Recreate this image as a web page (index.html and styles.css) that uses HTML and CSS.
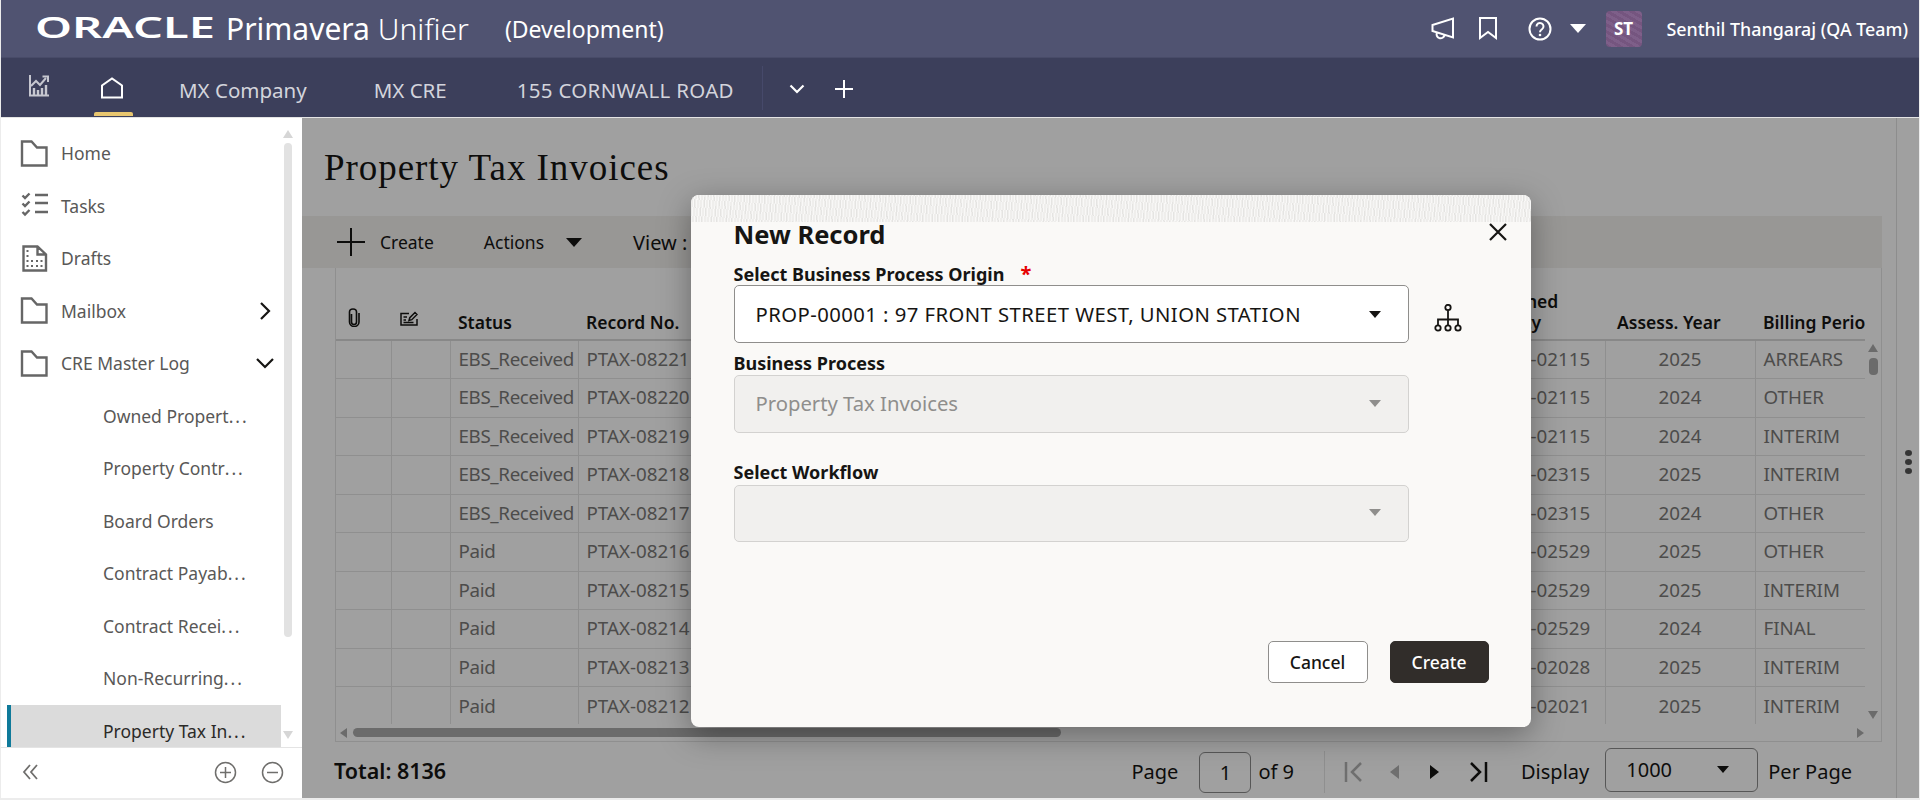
FILE: index.html
```html
<!DOCTYPE html>
<html>
<head>
    <title>Property Tax Invoices</title>
    <link rel="stylesheet" href="styles.css">
</head>

<body>
<div class="app">
    <div class="topbar">
        <svg class="oracle" width="184" height="42"><text x="0" y="32" textLength="180" lengthAdjust="spacingAndGlyphs">ORACLE</text></svg>
        <span class="product">Primavera <span class="thin">Unifier</span></span>
        <span class="env">(Development)</span>
        <div class="top-right">
            <svg class="ico" width="24" height="24" viewBox="0 0 24 24"><path d="M1.500 8 22 1.500v19L1.500 14zM6 15.500a4 4 0 1 0 7.500 2.500" fill="none" stroke="#fff" stroke-width="2"/></svg>
            <svg class="ico bm" width="20" height="23" viewBox="0 0 20 23"><path d="M2 1h16v20l-8-6-8 6z" fill="none" stroke="#fff" stroke-width="2"/></svg>
            <svg class="ico help" width="24" height="24" viewBox="0 0 24 24"><circle cx="12" cy="12" r="10.500" fill="none" stroke="#fff" stroke-width="2"/><path d="M8.500 9.500a3.500 3.500 0 1 1 5.500 2.800c-1.300.9-2 1.500-2 3" fill="none" stroke="#fff" stroke-width="2"/><circle cx="12" cy="18" r="1.300" fill="#fff"/></svg>
            <span class="caret-white"></span>
            <span class="avatar">ST</span>
            <span class="username">Senthil Thangaraj (QA Team)</span>
        </div>
    </div>

    <div class="navbar">
        <svg class="nav-chart" width="22" height="22" viewBox="0 0 22 22"><path d="M2 0v20.500h19" fill="none" stroke="#c6c7d0" stroke-width="2"/><path d="M3 11l5-5 4 4 6-7" fill="none" stroke="#c6c7d0" stroke-width="2"/><path d="M14.500 1.500H20V7" fill="none" stroke="#c6c7d0" stroke-width="2"/><path d="M6 20v-7M10 20v-5M14 20v-7M18 20V10" stroke="#c6c7d0" stroke-width="2.400"/></svg>
        <div class="nav-home">
            <svg width="24" height="22" viewBox="0 0 24 22"><path d="M2 20.500V8.500L12 1.500l10 7v12z" fill="none" stroke="#fff" stroke-width="2"/></svg>
            <span class="home-mark"></span>
        </div>
        <span class="nav-tab tab-company">MX Company</span>
        <span class="nav-tab tab-cre">MX CRE</span>
        <span class="nav-tab tab-road">155 CORNWALL ROAD</span>
        <span class="nav-sep"></span>
        <svg class="nav-more" width="16" height="10" viewBox="0 0 16 10"><path d="M1.500 1.500 8 8l6.500-6.500" fill="none" stroke="#fff" stroke-width="2.200"/></svg>
        <svg class="nav-add" width="20" height="20" viewBox="0 0 20 20"><path d="M10 1v18M1 10h18" stroke="#fff" stroke-width="2"/></svg>
    </div>

    <div class="workspace">
        <div class="sidebar">
            <div class="side-list">
                <div class="side-items">
                    <div class="side-item"><svg class="side-ico" width="28" height="27" viewBox="0 0 28 27"><path class="outline" d="M2 1.500H11.500L17 7.500h9.500v18H2z"/></svg>Home</div>
                    <div class="side-item"><svg class="side-ico" width="28" height="27" viewBox="0 0 28 27"><path class="outline" d="M2.500 3.500l2.500 2.500 4.500-4.500M2.500 11.500l2.500 2.500 4.500-4.500M2.500 20l2.500 2.500 4.500-4.500M15 3h13M15 11h13M15 20h13"/></svg>Tasks</div>
                    <div class="side-item"><svg class="side-ico" width="28" height="27" viewBox="0 0 28 27"><path class="outline" d="M3.500 1.500H17.500L26 9.500v16H3.500zM17.500 1.500v8H26"/><path class="dots" d="M6.500 6h2M6.500 11h2M6.500 16h2M11 16h2M16 16h2M20.500 16h2M6.500 21h2M11 21h2M16 21h2M20.500 21h2"/></svg>Drafts</div>
                    <div class="side-item"><svg class="side-ico" width="28" height="27" viewBox="0 0 28 27"><path class="outline" d="M2 1.500H11.500L17 7.500h9.500v18H2z"/></svg>Mailbox<svg class="side-arrow" width="12" height="20" viewBox="0 0 12 20"><path d="M2 2l8 8-8 8" fill="none" stroke="#161513" stroke-width="2.200"/></svg></div>
                    <div class="side-item"><svg class="side-ico" width="28" height="27" viewBox="0 0 28 27"><path class="outline" d="M2 1.500H11.500L17 7.500h9.500v18H2z"/></svg>CRE Master Log<svg class="side-arrow down" width="20" height="12" viewBox="0 0 20 12"><path d="M2 2l8 8 8-8" fill="none" stroke="#161513" stroke-width="2.200"/></svg></div>
                    <div class="side-item sub">Owned Propert<span class="more">...</span></div>
                    <div class="side-item sub">Property Contr<span class="more">...</span></div>
                    <div class="side-item sub">Board Orders</div>
                    <div class="side-item sub">Contract Payab<span class="more">...</span></div>
                    <div class="side-item sub">Contract Recei<span class="more">...</span></div>
                    <div class="side-item sub">Non-Recurring<span class="more">...</span></div>
                    <div class="side-item sub selected">Property Tax In<span class="more">...</span></div>
                </div>
                <div class="side-scroll">
                    <span class="arrow-up"></span>
                    <span class="side-thumb"></span>
                    <span class="arrow-down"></span>
                </div>
            </div>
            <div class="side-foot">
                <svg width="18" height="18" viewBox="0 0 18 18"><path d="M8 2 2 9l6 7M15 2 9 9l6 7" fill="none" stroke="#6f6e6c" stroke-width="1.800"/></svg>
                <svg class="foot-plus" width="23" height="23" viewBox="0 0 23 23"><circle cx="11.500" cy="11.500" r="10" fill="none" stroke="#6f6e6c" stroke-width="1.500"/><path d="M11.500 6v11M6 11.500h11" stroke="#6f6e6c" stroke-width="1.500"/></svg>
                <svg class="foot-minus" width="23" height="23" viewBox="0 0 23 23"><circle cx="11.500" cy="11.500" r="10" fill="none" stroke="#6f6e6c" stroke-width="1.500"/><path d="M6 11.500h11" stroke="#6f6e6c" stroke-width="1.500"/></svg>
            </div>
        </div>

        <div class="main">
            <div class="content">
                <h1 class="page-title">Property Tax Invoices</h1>
                <div class="toolbar">
                    <svg width="28" height="28" viewBox="0 0 28 28"><path d="M14 0v28M0 14h28" stroke="#161513" stroke-width="2"/></svg>
                    <span class="tool-create">Create</span>
                    <span class="tool-actions">Actions</span>
                    <span class="caret-dark"></span>
                    <span class="tool-view">View :</span>
                </div>
                <div class="grid">
                    <div class="grid-body">
                        <div class="table-wrap">
                            <table class="records">
                                <colgroup>
                                    <col class="c-attach"><col class="c-edit"><col class="c-status"><col class="c-record"><col class="c-fill"><col class="c-prop"><col class="c-year"><col class="c-bill">
                                </colgroup>
                                <thead>
                                    <tr>
                                        <th class="icon-head"><svg width="14" height="19" viewBox="0 0 14 19"><path d="M4.500 6v8a2.500 2.500 0 0 0 5 0V4a3.500 3 0 0 0-7 0v10a4.750 4.500 0 0 0 9.500 0V5" fill="none" stroke="#161513" stroke-width="1.600"/></svg></th>
                                        <th class="icon-head edit-head"><svg width="18" height="15" viewBox="0 0 18 15"><path d="M9 2.500H1v11.500h16V8M3.500 6H7M3.500 9H6M3.500 11.500h10M9 9.500l.8-2.800L15 1.500 17 3.500l-5.200 5.200z" fill="none" stroke="#161513" stroke-width="1.500"/></svg></th>
                                        <th>Status</th>
                                        <th>Record No.</th>
                                        <th></th>
                                        <th>Assigned<br>Facility</th>
                                        <th class="year-head">Assess. Year</th>
                                        <th>Billing Period</th>
                                    </tr>
                                </thead>
                                <tbody>
                                    <tr><td></td><td></td><td class="st">EBS_Received</td><td>PTAX-08221</td><td></td><td>PROP-02115</td><td class="mid">2025</td><td>ARREARS</td></tr>
                                    <tr><td></td><td></td><td class="st">EBS_Received</td><td>PTAX-08220</td><td></td><td>PROP-02115</td><td class="mid">2024</td><td>OTHER</td></tr>
                                    <tr><td></td><td></td><td class="st">EBS_Received</td><td>PTAX-08219</td><td></td><td>PROP-02115</td><td class="mid">2024</td><td>INTERIM</td></tr>
                                    <tr><td></td><td></td><td class="st">EBS_Received</td><td>PTAX-08218</td><td></td><td>PROP-02315</td><td class="mid">2025</td><td>INTERIM</td></tr>
                                    <tr><td></td><td></td><td class="st">EBS_Received</td><td>PTAX-08217</td><td></td><td>PROP-02315</td><td class="mid">2024</td><td>OTHER</td></tr>
                                    <tr><td></td><td></td><td class="st">Paid</td><td>PTAX-08216</td><td></td><td>PROP-02529</td><td class="mid">2025</td><td>OTHER</td></tr>
                                    <tr><td></td><td></td><td class="st">Paid</td><td>PTAX-08215</td><td></td><td>PROP-02529</td><td class="mid">2025</td><td>INTERIM</td></tr>
                                    <tr><td></td><td></td><td class="st">Paid</td><td>PTAX-08214</td><td></td><td>PROP-02529</td><td class="mid">2024</td><td>FINAL</td></tr>
                                    <tr><td></td><td></td><td class="st">Paid</td><td>PTAX-08213</td><td></td><td>PROP-02028</td><td class="mid">2025</td><td>INTERIM</td></tr>
                                    <tr><td></td><td></td><td class="st">Paid</td><td>PTAX-08212</td><td></td><td>PROP-02021</td><td class="mid">2025</td><td>INTERIM</td></tr>
                                </tbody>
                            </table>
                        </div>
                        <div class="vscroll">
                            <span class="arrow-up"></span>
                            <span class="v-thumb"></span>
                            <span class="arrow-down"></span>
                        </div>
                    </div>
                    <div class="hscroll">
                        <span class="arrow-left"></span>
                        <span class="h-thumb"></span>
                        <span class="arrow-right"></span>
                    </div>
                </div>
                <div class="pager">
                    <span class="total">Total: 8136</span>
                    <span class="page-label">Page</span>
                    <span class="page-box">1</span>
                    <span class="page-of">of 9</span>
                    <span class="pager-sep"></span>
                    <svg class="pg-first" width="20" height="22" viewBox="0 0 20 22"><path d="M2 1v20" stroke="#b0b0b0" stroke-width="2.500"/><path d="M17 2 8 11l9 9" fill="none" stroke="#b0b0b0" stroke-width="2.500"/></svg>
                    <span class="tri-left"></span>
                    <span class="tri-right"></span>
                    <svg class="pg-last" width="20" height="22" viewBox="0 0 20 22"><path d="M18 1v20" stroke="#161513" stroke-width="2.500"/><path d="M3 2l9 9-9 9" fill="none" stroke="#161513" stroke-width="2.500"/></svg>
                    <span class="display-label">Display</span>
                    <span class="display-box">1000<span class="caret-dark small"></span></span>
                    <span class="per-page">Per Page</span>
                </div>
            </div>
            <div class="rail">
                <span class="dot"></span><span class="dot"></span><span class="dot"></span>
            </div>

            <div class="scrim">
                <div class="modal">
                    <div class="modal-band"></div>
                    <svg class="modal-close" width="20" height="20" viewBox="0 0 20 20"><path d="M2 2l16 16M18 2 2 18" stroke="#161513" stroke-width="2.200"/></svg>
                    <h2 class="modal-title">New Record</h2>
                    <div class="field-label first">Select Business Process Origin<span class="req">*</span></div>
                    <div class="origin-row">
                        <div class="select origin">PROP-00001 : 97 FRONT STREET WEST, UNION STATION<span class="select-caret"></span></div>
                        <svg class="tree" width="28" height="28" viewBox="0 0 28 28"><circle cx="14" cy="3.500" r="2.700" fill="none" stroke="#161513" stroke-width="1.800"/><path d="M14 6.500v9M4 21v-5.500h20V21M14 15.500V21" fill="none" stroke="#161513" stroke-width="1.800"/><circle cx="4" cy="24" r="2.700" fill="none" stroke="#161513" stroke-width="1.800"/><circle cx="14" cy="24" r="2.700" fill="none" stroke="#161513" stroke-width="1.800"/><circle cx="24" cy="24" r="2.700" fill="none" stroke="#161513" stroke-width="1.800"/></svg>
                    </div>
                    <div class="field-label second">Business Process</div>
                    <div class="select off">Property Tax Invoices<span class="select-caret"></span></div>
                    <div class="field-label third">Select Workflow</div>
                    <div class="select off last">&nbsp;<span class="select-caret"></span></div>
                    <div class="modal-foot">
                        <button class="btn">Cancel</button>
                        <button class="btn primary">Create</button>
                    </div>
                </div>
            </div>
        </div>
    </div>
</div>
</body>
</html>
```

FILE: styles.css
```css
* { box-sizing: border-box; }
body { margin: 0; background-color: #ececec; font-family: "Noto Sans", Arial, sans-serif; color: #161513; }

.app { width: 1920px; height: 800px; padding: 0 1px 2px 1px; display: flex; flex-direction: column; overflow: hidden; }

/* top bars */
.topbar { height: 58px; background-color: #505371; color: #fff; display: flex; align-items: center; border-bottom: 1px solid #484b68; }
.oracle { margin-left: 34px; margin-bottom: 3px; flex-shrink: 0; }
.oracle text { font-family: "Noto Sans", sans-serif; font-weight: 600; font-size: 28px; fill: #fff; }
.product { margin-left: 7px; font-size: 30px; }
.product .thin { font-weight: 300; }
.env { margin-left: 36px; font-size: 23px; }
.top-right { margin-left: auto; display: flex; align-items: center; padding-right: 11px; }
.bm { margin-left: 23px; }
.help { margin-left: 30px; }
.caret-white { margin-left: 18px; border-left: 8px solid transparent; border-right: 8px solid transparent; border-top: 9px solid #fff; }
.avatar {
    margin-left: 20px;
    width: 36px;
    height: 36px;
    border-radius: 4px;
    background: repeating-linear-gradient(30deg, #75557f 0 3px, #7e5f89 3px 6px);
    display: flex;
    align-items: center;
    justify-content: center;
    font-size: 17px;
    font-weight: 700;
}
.username { margin-left: 25px; font-size: 17.850px; font-weight: 500; }

.navbar { height: 60px; background-color: #3c3f5b; border-bottom: 1px solid #e4e4e4; display: flex; align-items: center; color: #d3d4dc; font-size: 20.500px; }
.nav-chart { margin-left: 27px; margin-top: -3px; }
.nav-home { margin-left: 43px; width: 40px; height: 59px; display: flex; flex-direction: column; align-items: center; padding-top: 19px; }
.nav-tab { padding-top: 4px; }
.nav-home svg { margin-left: -3px; }
.home-mark { margin-top: 13px; width: 39px; height: 4px; background-color: #e8c66f; border-radius: 2px 2px 0 0; }
.tab-company { margin-left: 46px; }
.tab-cre { margin-left: 67px; }
.tab-road { margin-left: 70px; letter-spacing: .3px; }
.nav-sep { margin-left: 28px; width: 1px; height: 44px; background-color: #46496a; }
.nav-more { margin-left: 26px; margin-top: 3px; }
.nav-add { margin-left: 29px; margin-top: 3px; }

.workspace { flex-grow: 1; display: flex; min-height: 0; }

/* left tree */
.sidebar { width: 301px; background-color: #fff; display: flex; flex-direction: column; }
.side-list { height: 630px; padding-left: 6px; display: flex; overflow: hidden; border-bottom: 1px solid #e4e4e4; }
.side-items { width: 274px; flex-shrink: 0; padding-top: 9px; }
.side-item { height: 52.500px; display: flex; align-items: center; font-size: 17.500px; color: #595857; padding-left: 13px; }
.side-ico { margin-right: 13px; flex-shrink: 0; }
.outline { fill: none; stroke: #666; stroke-width: 2.400; }
.dots { stroke: #666; stroke-width: 2; }
.more { letter-spacing: 2px; }
.side-arrow { margin-left: auto; margin-right: 10px; }
.side-arrow.down { margin-right: 6px; }
.side-item.sub { padding-left: 96px; }
.side-item.selected { background-color: #dbdbdb; border-left: 4px solid #0f7a9a; padding-left: 92px; color: #2b2a28; }
.side-scroll { width: 11px; margin-left: 1px; display: flex; flex-direction: column; align-items: center; padding-top: 12px; }
.side-thumb { margin-top: 5px; width: 8px; height: 494px; background-color: #e2e2e2; border-radius: 4px; }
.side-scroll .arrow-down { margin-top: 94px; }
.arrow-up { border-left: 5px solid transparent; border-right: 5px solid transparent; border-bottom: 8px solid #d6d6d6; }
.arrow-down { border-left: 5px solid transparent; border-right: 5px solid transparent; border-top: 8px solid #d6d6d6; }
.side-foot { flex-grow: 1; display: flex; align-items: center; padding-left: 21px; padding-bottom: 2px; }
.foot-plus { margin-left: auto; }
.foot-minus { margin-left: 24px; margin-right: 18px; }

/* page behind the dialog */
.main { flex-grow: 1; position: relative; display: flex; background-color: #fefefe; min-width: 0; }
.content { width: 1594px; }
.page-title { margin: 0; height: 98px; padding-left: 22px; line-height: 100px; font-family: "Liberation Serif", serif; font-weight: 400; font-size: 37px; letter-spacing: .95px; }
.toolbar { height: 52px; margin-right: 14px; background-color: #f1efed; display: flex; align-items: center; padding-left: 35px; font-size: 17.500px; }
.tool-create { margin-left: 15px; }
.tool-actions { margin-left: 50px; }
.caret-dark { margin-left: 22px; border-left: 8px solid transparent; border-right: 8px solid transparent; border-top: 9px solid #161513; }
.tool-view { margin-left: 51px; font-size: 20px; }

.grid { height: 474px; margin-left: 33px; margin-right: 14px; border-left: 1px solid #e3e3e3; border-right: 1px solid #e3e3e3; border-bottom: 1px solid #e3e3e3; }
.grid-body { height: 456px; display: flex; }
.table-wrap { width: 1529px; overflow: hidden; flex-shrink: 0; }
.records { table-layout: fixed; width: 1700px; border-collapse: collapse; font-size: 18.750px; color: #7a7977; }
.c-attach { width: 55px; }
.c-edit { width: 59px; }
.c-status { width: 128px; }
.c-record { width: 142px; }
.c-fill { width: 753px; }
.c-prop { width: 132px; }
.c-year { width: 150px; }
.c-bill { width: 281px; }
.records th { height: 72px; padding: 0 8px 6px 8px; border-bottom: 2px solid #d8d8d8; text-align: left; vertical-align: bottom; font-size: 17.500px; font-weight: 600; line-height: 21px; color: #161513; white-space: nowrap; }
.records th.icon-head { padding: 0 20px 12px 0; }
.records th.edit-head { padding: 0 23px 13px 0; }
.icon-head svg { display: block; margin: 0 auto; }
.records th.year-head { padding-left: 12px; }
.records td { height: 38.500px; padding: 0 8px 2px 8px; border-bottom: 1px solid #e3e3e3; border-right: 1px solid #e3e3e3; white-space: nowrap; }
.records tbody tr:last-child td { border-bottom: none; }
.records .mid { text-align: center; }
.records .st { letter-spacing: -.35px; }
.vscroll { flex-grow: 1; display: flex; flex-direction: column; align-items: center; padding-top: 76px; }
.v-thumb { margin-top: 6px; width: 9px; height: 17px; border-radius: 4px; background-color: #aaa; }
.vscroll .arrow-down { margin-top: 336px; }
.vscroll .arrow-up, .vscroll .arrow-down { border-top-color: #aaa; border-bottom-color: #aaa; }
.vscroll .arrow-up { border-top-color: transparent; }
.hscroll { height: 17px; display: flex; align-items: center; padding-left: 4px; }
.arrow-left { border-top: 5px solid transparent; border-bottom: 5px solid transparent; border-right: 7px solid #aaa; }
.arrow-right { border-top: 5px solid transparent; border-bottom: 5px solid transparent; border-left: 7px solid #aaa; margin-left: 796px; }
.h-thumb { margin-left: 6px; width: 708px; height: 9px; border-radius: 5px; background-color: #aaa; }

.pager { height: 56px; padding-top: 3px; margin-left: 32px; margin-right: 44px; display: flex; align-items: center; font-size: 20px; }
.total { margin-top: -2px; font-size: 21.500px; font-weight: 600; }
.page-label { margin-left: auto; }
.page-box { margin-left: 21px; margin-top: 2px; width: 52px; height: 41px; border: 1px solid #8a8a8a; border-radius: 6px; display: flex; align-items: center; justify-content: center; }
.page-of { margin-left: 7px; }
.pager-sep { margin-left: 30px; width: 1px; height: 42px; background-color: #e3e3e3; }
.pg-first { margin-left: 19px; }
.tri-left { margin-left: 26px; border-top: 7px solid transparent; border-bottom: 7px solid transparent; border-right: 9px solid #b0b0b0; }
.tri-right { margin-left: 31px; border-top: 7px solid transparent; border-bottom: 7px solid transparent; border-left: 9px solid #161513; }
.pg-last { margin-left: 29px; }
.display-label { margin-left: 33px; }
.display-box { margin-left: 16px; margin-top: -4px; width: 153px; height: 44px; padding: 0 28px 0 20px; border: 1px solid #8a8a8a; border-radius: 6px; display: flex; align-items: center; justify-content: space-between; }
.caret-dark.small { margin-left: 0; border-left-width: 6px; border-right-width: 6px; border-top-width: 7px; }
.per-page { margin-left: 10px; }

.rail { flex-grow: 1; border-left: 1px solid #e0e0e0; display: flex; flex-direction: column; align-items: center; justify-content: center; gap: 3px; padding-top: 8px; }
.dot { width: 7px; height: 6px; border-radius: 50%; background-color: #555; }

/* dialog */
.scrim { position: absolute; top: 0; left: 0; right: 0; bottom: 0; background-color: rgba(0, 0, 0, .37); display: flex; align-items: center; justify-content: center; }
.modal { position: relative; margin-top: 6px; width: 840px; height: 532px; padding: 0 42px 44px 43px; background-color: #faf9f7; border-radius: 8px; box-shadow: 0 8px 32px rgba(0, 0, 0, .35); display: flex; flex-direction: column; overflow: hidden; }
.modal-band {
    flex-shrink: 0;
    height: 27px;
    margin: 0 -42px 0 -43px;
    background-color: #efeeec;
    background-image: repeating-linear-gradient(97deg, rgba(255, 255, 255, .6) 0 1px, transparent 1px 3px), repeating-linear-gradient(84deg, rgba(210, 210, 208, .35) 0 1px, transparent 1px 5px);
}
.modal-close { position: absolute; top: 27px; right: 23px; }
.modal-title { margin: -2px 0 2px 0; height: 28px; line-height: 28px; font-size: 25.500px; font-weight: 700; }
.field-label { height: 20px; line-height: 18px; font-size: 18px; font-weight: 700; }
.field-label.first { margin-top: 15px; }
.field-label.second { margin-top: 11px; }
.field-label.third { margin-top: 30px; }
.req { margin-left: 16px; color: #e60000; font-size: 20px; }
.origin-row { display: flex; align-items: center; }
.select { width: 675px; height: 58px; flex-shrink: 0; padding: 0 26px 0 21px; background-color: #fff; border: 1px solid #8f8e8c; border-radius: 5px; font-size: 20.250px; display: flex; align-items: center; justify-content: space-between; }
.select.origin { letter-spacing: .45px; }
.select.off { margin-top: 1px; padding-bottom: 2px; background-color: #f1f0ee; border-color: #d3d2d0; color: #8f8e8c; }
.select.last { margin-top: 2px; height: 57px; }
.select-caret { border-left: 6px solid transparent; border-right: 6px solid transparent; border-top: 7px solid #161513; margin-right: 1px; }
.off .select-caret { border-top-color: #8f8e8c; }
.tree { margin-left: 25px; margin-top: 8px; }
.modal-foot { margin-top: auto; display: flex; justify-content: flex-end; gap: 22px; }
.btn { width: 100px; height: 42px; border: 1px solid #8f8e8c; border-radius: 5px; background-color: #fff; font-family: inherit; font-size: 17.500px; font-weight: 500; color: #161513; }
.btn.primary { width: 99px; background-color: #312d2a; border-color: #312d2a; color: #fff; }
```
